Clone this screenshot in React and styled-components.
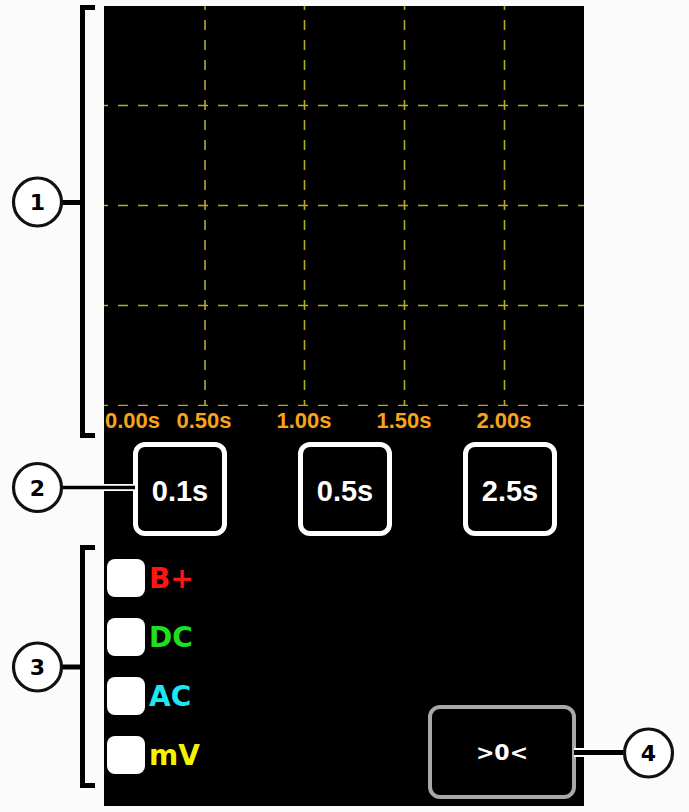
import React from "react";
import styled, { createGlobalStyle } from "styled-components";

const GlobalStyle = createGlobalStyle`
  html, body { margin: 0; padding: 0; background: #fbfbfb; }
  body { font-family: "Liberation Sans", Arial, sans-serif; }
`;

const Page = styled.div`
  position: relative;
  width: 689px;
  height: 812px;
  box-sizing: border-box;
  padding-top: 6px;
  display: flex;
`;

const Gutter = styled.div`
  width: 104px;
  flex: none;
`;

const Panel = styled.main`
  width: 480px;
  height: 800px;
  flex: none;
  background: #000;
  display: flex;
  flex-direction: column;
`;

const Scope = styled.svg`
  display: block;
  flex: none;
`;

const AxisRow = styled.div`
  display: grid;
  grid-template-columns: 50px repeat(4, 100px);
  height: 30px;
  align-items: center;
`;

const AxisLabel = styled.span`
  color: #f8a31b;
  font-family: "Liberation Sans", Arial, sans-serif;
  font-weight: bold;
  font-size: 22px;
  line-height: 30px;
  white-space: nowrap;
  text-align: ${(p) => (p.$start ? "left" : "center")};
  padding-left: ${(p) => (p.$start ? "1px" : "0")};
`;

const SpanRow = styled.div`
  display: flex;
  gap: 71px;
  padding-left: 29px;
  margin-top: 6px;
`;

const SpanButton = styled.button`
  width: 94px;
  height: 94px;
  box-sizing: border-box;
  border: 5px solid #fff;
  border-radius: 12px;
  background: #000;
  color: #fff;
  font-family: "Liberation Sans", Arial, sans-serif;
  font-weight: bold;
  font-size: 29px;
  display: flex;
  align-items: center;
  justify-content: center;
  padding: 0;
  padding-top: 4px;
`;

const Bottom = styled.div`
  flex: 1;
  display: flex;
  justify-content: space-between;
  align-items: flex-start;
  padding: 23px 8px 7px 3px;
`;

const CheckList = styled.div`
  display: flex;
  flex-direction: column;
  gap: 21px;
`;

const CheckRow = styled.label`
  display: flex;
  align-items: center;
  gap: 4px;
  height: 38px;
`;

const Box = styled.span`
  width: 38px;
  height: 38px;
  background: #fff;
  border-radius: 8px;
  flex: none;
`;

const CheckText = styled.span`
  font-family: "DejaVu Sans", Verdana, sans-serif;
  font-weight: bold;
  font-size: 28px;
  line-height: 38px;
  color: ${(p) => p.$color};
  padding-top: 2px;
`;

const ZeroButton = styled.button`
  align-self: flex-end;
  width: 148px;
  height: 94px;
  box-sizing: border-box;
  border: 4px solid #a8a8a8;
  border-radius: 12px;
  background: #000;
  color: #fff;
  font-family: "DejaVu Sans", Verdana, sans-serif;
  font-weight: bold;
  font-size: 22px;
  display: flex;
  align-items: center;
  justify-content: center;
  padding: 0;
`;

const Callouts = styled.svg`
  position: absolute;
  left: 0;
  top: 0;
  pointer-events: none;
`;

const GRID = "#b3aa2c";

function Grid() {
  const xs = [101, 200.5, 300.5, 400.5];
  const ys = [99.5, 199.5, 299.5, 399.5];
  return (
    <Scope width="480" height="400" viewBox="0 0 480 400">
      <rect width="480" height="400" fill="#000" />
      {xs.map((x) => (
        <line key={"v" + x} x1={x} y1="0" x2={x} y2="400" stroke={GRID} strokeWidth="1.6" strokeDasharray="10 10" strokeDashoffset="6" />
      ))}
      {ys.map((y) => (
        <line key={"h" + y} x1="0" y1={y} x2="480" y2={y} stroke={GRID} strokeWidth="1.6" strokeDasharray="10 10" strokeDashoffset="6" />
      ))}
    </Scope>
  );
}

function Badge({ cx, cy, n }) {
  return (
    <g>
      <circle cx={cx} cy={cy} r="24" fill="#fff" stroke="#111" strokeWidth="3.2" />
      <text x={cx} y={cy + 8} textAnchor="middle" fontFamily="DejaVu Sans, sans-serif" fontWeight="bold" fontSize="22" fill="#000">
        {n}
      </text>
    </g>
  );
}

function Annotations() {
  return (
    <Callouts width="689" height="812" viewBox="0 0 689 812">
      <polyline points="95,7.5 82.5,7.5 82.5,435.5 95,435.5" fill="none" stroke="#000" strokeWidth="5" />
      <line x1="61" y1="202.5" x2="82" y2="202.5" stroke="#000" strokeWidth="5" />
      <Badge cx={37.5} cy={202} n="1" />

      <line x1="61" y1="487.5" x2="135" y2="487.5" stroke="#fff" strokeWidth="7" />
      <line x1="61" y1="487.5" x2="135" y2="487.5" stroke="#000" strokeWidth="3.5" />
      <Badge cx={37.5} cy={487.5} n="2" />

      <polyline points="95,547.5 82.5,547.5 82.5,785.5 95,785.5" fill="none" stroke="#000" strokeWidth="5" />
      <line x1="61" y1="667" x2="82" y2="667" stroke="#000" strokeWidth="5" />
      <Badge cx={37.5} cy={667} n="3" />

      <line x1="574" y1="752.5" x2="626" y2="752.5" stroke="#fff" strokeWidth="9" />
      <line x1="574" y1="752.5" x2="626" y2="752.5" stroke="#000" strokeWidth="5" />
      <Badge cx={648.5} cy={753} n="4" />
    </Callouts>
  );
}

const labels = ["0.00s", "0.50s", "1.00s", "1.50s", "2.00s"];
const spans = ["0.1s", "0.5s", "2.5s"];
const modes = [
  { t: "B+", c: "#ff1414" },
  { t: "DC", c: "#1ee01e" },
  { t: "AC", c: "#1ee6f2" },
  { t: "mV", c: "#f4f400" },
];

export default function App() {
  return (
    <>
      <GlobalStyle />
      <Page>
        <Gutter />
        <Panel>
          <Grid />
          <AxisRow>
            {labels.map((l, i) => (
              <AxisLabel key={l} $start={i === 0}>
                {l}
              </AxisLabel>
            ))}
          </AxisRow>
          <SpanRow>
            {spans.map((s) => (
              <SpanButton key={s}>{s}</SpanButton>
            ))}
          </SpanRow>
          <Bottom>
            <CheckList>
              {modes.map((m) => (
                <CheckRow key={m.t}>
                  <Box />
                  <CheckText $color={m.c}>{m.t}</CheckText>
                </CheckRow>
              ))}
            </CheckList>
            <ZeroButton>&gt;0&lt;</ZeroButton>
          </Bottom>
        </Panel>
        <Annotations />
      </Page>
    </>
  );
}
